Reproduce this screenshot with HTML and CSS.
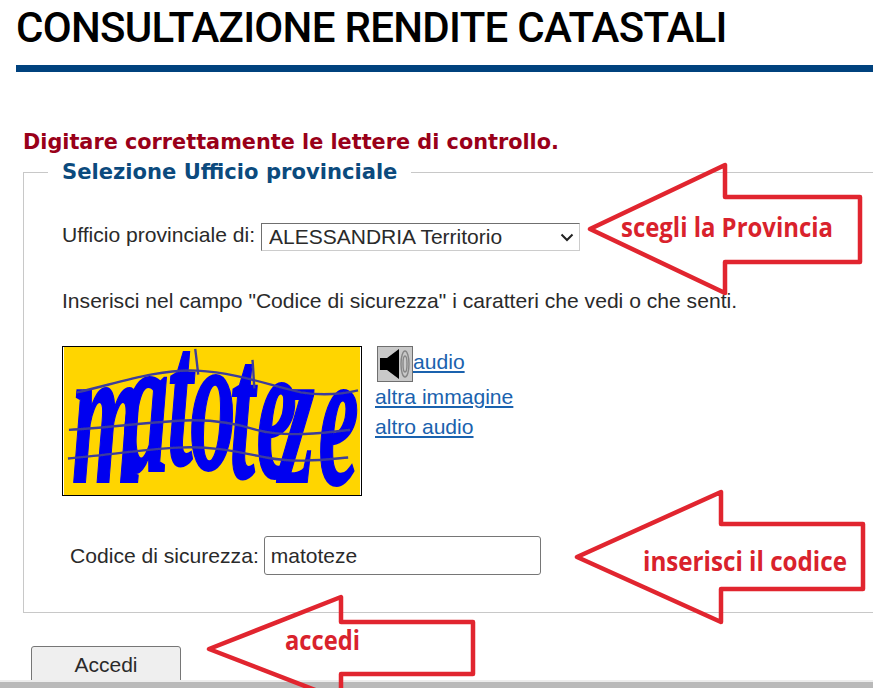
FILE: index.html
```html
<!DOCTYPE html>
<html lang="it">
<head>
<meta charset="utf-8">
<title>Consultazione rendite catastali</title>
<link rel="stylesheet" href="styles.css">
</head>
<body>
<header class="page-head">
  <h1>CONSULTAZIONE RENDITE CATASTALI</h1>
</header>
<main class="content">
  <p class="error">Digitare correttamente le lettere di controllo.</p>
  <form>
    <fieldset class="box">
      <legend>Selezione Ufficio provinciale</legend>
      <div class="row-select">
        <label for="prov">Ufficio provinciale di:</label>
        <span class="select-wrap">
          <select id="prov"><option>ALESSANDRIA Territorio</option></select>
          <svg class="chevron" viewBox="0 0 14 9" aria-hidden="true"><path d="M1.5 1.5L7 7L12.5 1.5"/></svg>
        </span>
      </div>
      <p class="hint">Inserisci nel campo "Codice di sicurezza" i caratteri che vedi o che senti.</p>
      <div class="captcha-row">
        <svg class="captcha" viewBox="0 0 300 150" role="img" aria-label="matoteze">
          <defs><filter id="soft"><feGaussianBlur stdDeviation="0.7"/></filter></defs>
          <rect width="300" height="150" fill="#ffd500"/>
          <g filter="url(#soft)">
            <text class="captcha-text" transform="scale(1 2.2)" y="62 57 54 56 60 60 62 63" x="8 60 105 128 168 195 218 258">matoteze</text>
            <g fill="none" stroke="#3c3c9c" stroke-width="2.4">
              <path d="M13 46C50 38 95 22 135 24C175 26 205 38 240 46C265 50 285 47 298 44"/>
              <path d="M5 84C40 82 70 78 100 76C135 72 165 74 195 84C225 92 265 87 290 84"/>
              <path d="M4 113C40 110 80 104 115 102C150 100 175 106 205 112C235 118 265 114 288 112"/>
              <path d="M133 2C134 10 135 18 136 28"/>
              <path d="M191 13C192 22 192 32 193 42"/>
            </g>
          </g>
        </svg>
        <div class="captcha-links">
          <div class="audio-line">
            <svg class="speaker" viewBox="0 0 36 36" aria-hidden="true">
              <rect x="0.5" y="0.5" width="35" height="35" fill="#c9c9c9" stroke="#6f6f6f"/>
              <path d="M3 12H10L22 3V33L10 24H3Z" fill="#000"/>
              <g fill="none" stroke="#868686" stroke-width="1.4">
                <ellipse cx="28" cy="18" rx="4" ry="13"/>
                <ellipse cx="28" cy="18" rx="2" ry="8"/>
              </g>
            </svg><a href="#">audio</a>
          </div>
          <a href="#">altra immagine</a>
          <a href="#">altro audio</a>
        </div>
      </div>
      <div class="row-code">
        <label for="code">Codice di sicurezza:</label>
        <input id="code" type="text" value="matoteze">
      </div>
    </fieldset>
    <button type="button" class="submit">Accedi</button>
  </form>
</main>
<div class="bottom-strip"></div>
<svg class="notes" viewBox="0 0 873 688" aria-hidden="false">
  <g class="arrow">
    <path d="M590 229L725 165V197H860V262H725V293Z"/>
    <path d="M577 557L721 492V524H863V589H721V622Z"/>
    <path d="M209 649L341 597V622H473V674H341V700Z"/>
  </g>
  <text class="note" x="621" y="237" textLength="212" lengthAdjust="spacingAndGlyphs">scegli la Provincia</text>
  <text class="note" x="643" y="571" textLength="204" lengthAdjust="spacingAndGlyphs">inserisci il codice</text>
  <text class="note" x="285" y="650" textLength="75" lengthAdjust="spacingAndGlyphs">accedi</text>
</svg>
</body>
</html>
```
FILE: styles.css
```css
html, body {
  margin: 0;
  height: 688px;
  overflow: hidden;
  background: #fff;
}
body {
  position: relative;
  font-family: "Liberation Sans", Arial, sans-serif;
  font-size: 21.1px;
  color: #2a2a2a;
}
.page-head {
  margin-left: 16px;
  height: 65px;
  border-bottom: 7px solid #00427e;
}
h1 {
  margin: 0;
  padding-top: 2px;
  font-family: Roboto, sans-serif;
  font-size: 42px;
  line-height: 52px;
  font-weight: 500;
  letter-spacing: -0.7px;
  color: #000;
  white-space: nowrap;
}
.content {
  padding: 58px 0 0 23px;
}
.error {
  margin: 0 0 6px;
  font-family: "DejaVu Sans", Verdana, sans-serif;
  font-size: 20.8px;
  line-height: 24px;
  font-weight: 700;
  color: #990019;
}
.box {
  width: 850px;
  height: 453px;
  box-sizing: border-box;
  margin: 0;
  padding: 0 0 0 24px;
  border: 1px solid #c8c8c8;
  border-right: 0;
}
legend {
  padding: 0 14px;
  font-family: "DejaVu Sans", Verdana, sans-serif;
  font-size: 21.1px;
  line-height: 24px;
  font-weight: 700;
  color: #0b4a7d;
}
.row-select {
  display: flex;
  align-items: center;
  gap: 6px;
  margin: 39px 0 0 14px;
}
.row-select label {
  line-height: 24px;
  padding-bottom: 4px;
}
.select-wrap {
  position: relative;
  display: block;
}
select {
  display: block;
  width: 319px;
  height: 28px;
  box-sizing: border-box;
  padding: 0 30px 2px 7px;
  appearance: none;
  font: 21px "Liberation Sans", Arial, sans-serif;
  color: #2a2a2a;
  background: #fff;
  border: 1px solid #ccc;
  border-top-color: #6f6f6f;
  border-left-color: #6f6f6f;
  border-radius: 0;
}
.chevron {
  position: absolute;
  right: 6px;
  top: 10px;
  width: 14px;
  height: 9px;
  pointer-events: none;
}
.chevron path {
  fill: none;
  stroke: #222;
  stroke-width: 2;
}
.hint {
  margin: 38px 0 0 14px;
  line-height: 24px;
}
.captcha-row {
  display: flex;
  gap: 13px;
  margin: 33px 0 0 14px;
}
.captcha {
  display: block;
  width: 300px;
  height: 150px;
  box-sizing: border-box;
  border: 1px solid #000;
}
.captcha-text {
  font-family: "Liberation Serif", serif;
  font-style: italic;
  font-weight: 700;
  font-size: 92px;
  fill: #0000f0;
  stroke: #0000f0;
  stroke-width: 1;
}
.captcha-links {
  display: flex;
  flex-direction: column;
  align-items: flex-start;
  line-height: 30px;
}
.captcha-links a {
  color: #1a62ae;
}
.audio-line {
  display: flex;
  align-items: flex-start;
  height: 36px;
  margin-left: 2px;
  line-height: 32px;
}
.speaker {
  width: 36px;
  height: 36px;
  display: block;
}
.row-code {
  display: flex;
  align-items: center;
  gap: 5px;
  margin: 40px 0 0 22px;
}
input {
  width: 277px;
  height: 39px;
  box-sizing: border-box;
  padding: 0 6px;
  font: 21px "Liberation Sans", Arial, sans-serif;
  color: #2a2a2a;
  border: 1px solid #767676;
  border-radius: 3px;
}
.submit {
  display: block;
  width: 150px;
  height: 42px;
  margin: 33px 0 0 8px;
  padding: 0 0 4px;
  font: 21px "Liberation Sans", Arial, sans-serif;
  color: #2a2a2a;
  background: #efefef;
  border: 1px solid #767676;
  border-radius: 3px;
}
.bottom-strip {
  position: absolute;
  left: 0;
  right: 0;
  bottom: 0;
  height: 6px;
  background: #b9b9b9;
  border-top: 2px solid #ececec;
}
.notes {
  position: absolute;
  left: 0;
  top: 0;
  width: 873px;
  height: 688px;
  pointer-events: none;
}
.arrow path {
  fill: none;
  stroke: #e1252f;
  stroke-width: 4.5;
  stroke-linejoin: round;
}
.note {
  font-family: "Open Sans", sans-serif;
  font-size: 26px;
  font-weight: 700;
  fill: #d9222c;
}
```
